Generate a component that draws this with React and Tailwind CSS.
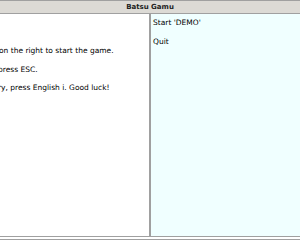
export default function App() {
  return (
    <div className="w-[300px] h-[240px] flex flex-col bg-white overflow-hidden" style={{ fontFamily: '"DejaVu Sans", sans-serif' }}>
      <div className="h-[14px] shrink-0 bg-[#dcdad5] border-t border-b border-[#a0a0a0] flex items-center justify-center text-[7px] font-bold text-[#222] leading-none">
        Batsu Gamu
      </div>
      <div className="flex-1 flex min-h-0">
        <div className="w-[149px] shrink-0 bg-white overflow-hidden text-[7.5px] text-black leading-none pt-[33px]">
          <p className="whitespace-nowrap h-[18.5px] -ml-[1px]">on the right to start the game.</p>
          <p className="whitespace-nowrap h-[18.5px] -ml-[2px]">press ESC.</p>
          <p className="whitespace-nowrap -ml-[2px]">ry, press English i. Good luck!</p>
        </div>
        <div className="flex-1 bg-[#f0ffff] border-l-2 border-[#a0a0a0] text-[7.5px] text-black leading-none pl-[2px] pt-[5px]">
          <p className="whitespace-nowrap h-[18.5px]">Start 'DEMO'</p>
          <p className="whitespace-nowrap">Quit</p>
        </div>
      </div>
      <div className="h-[4px] shrink-0 border-t border-b border-[#a0a0a0] bg-white"></div>
    </div>
  );
}
